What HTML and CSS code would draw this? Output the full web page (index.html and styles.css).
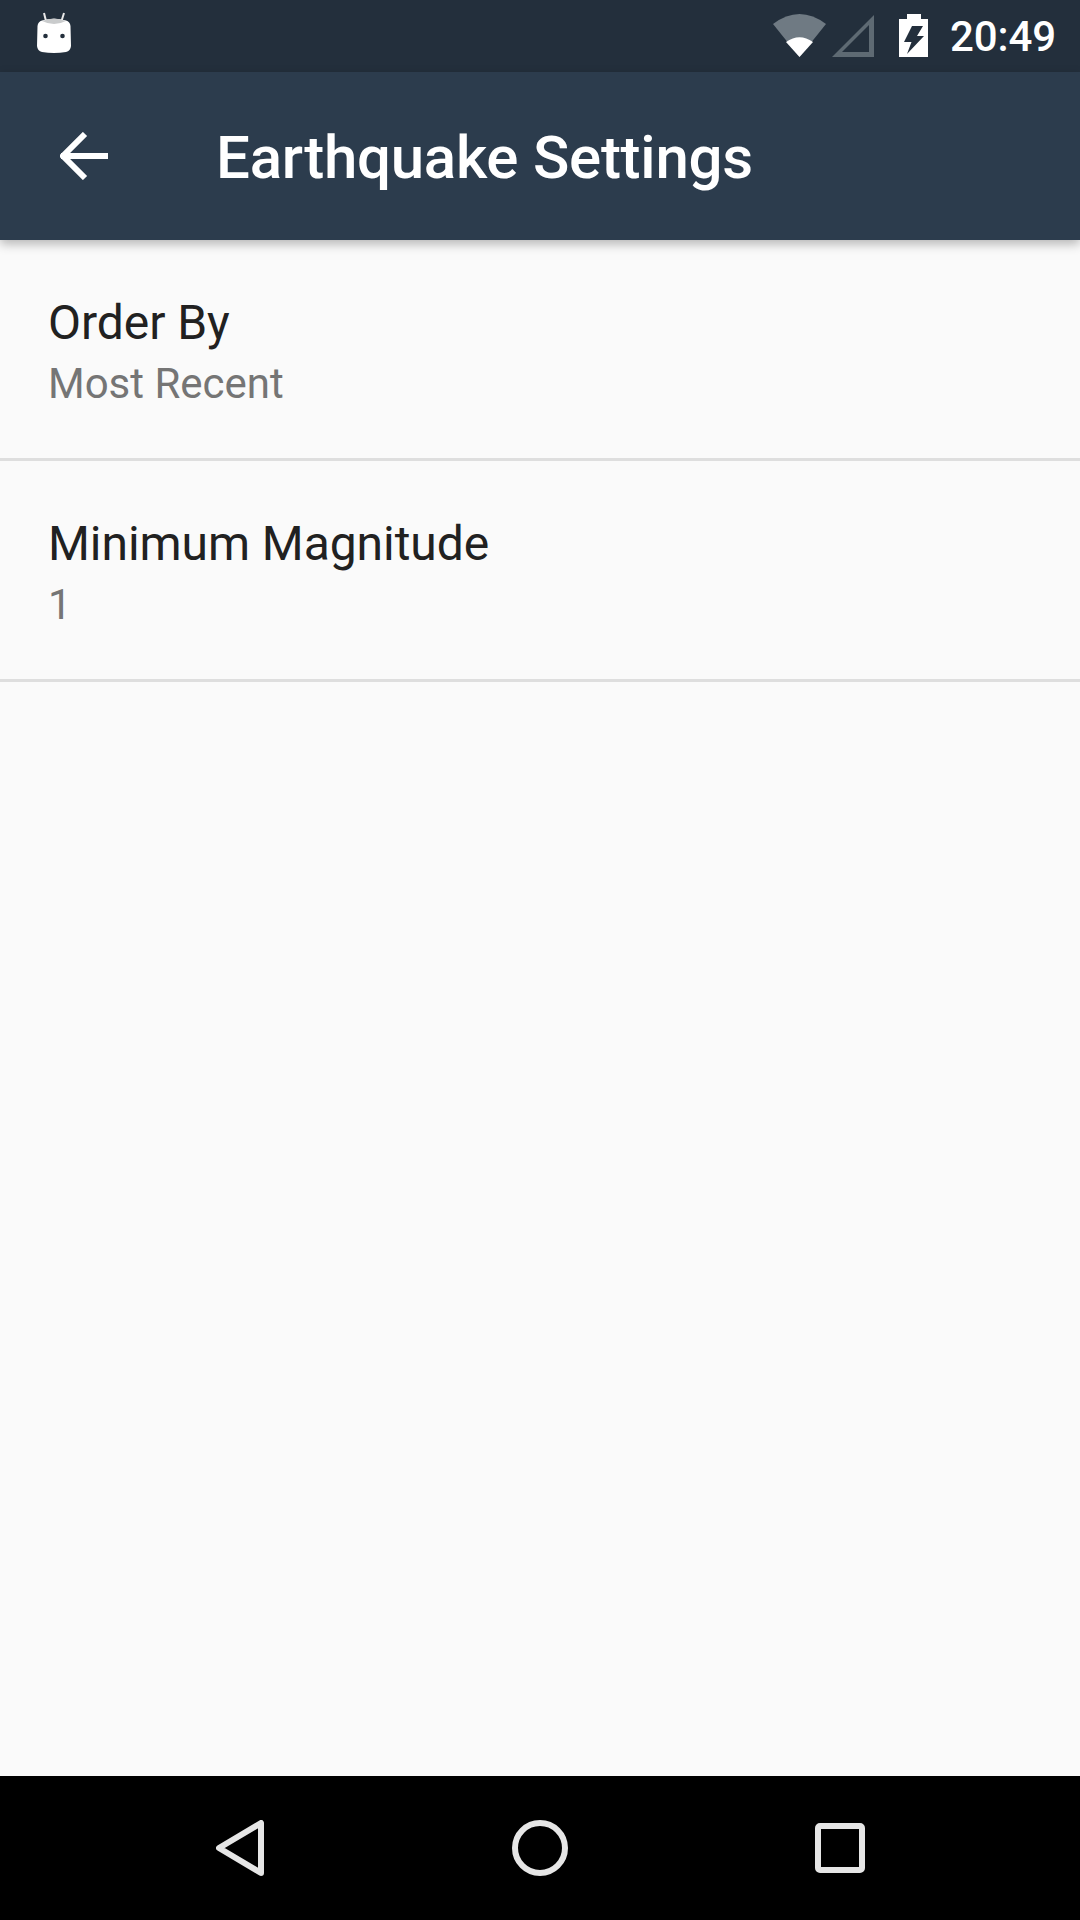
FILE: index.html
```html
<!DOCTYPE html>
<html lang="en">
<head>
<meta charset="utf-8">
<title>Earthquake Settings</title>
<link rel="stylesheet" href="styles.css">
</head>
<body>
<div class="screen">
  <header class="status-bar">
    <svg class="icon-bot" width="36" height="42" viewBox="0 0 36 42">
      <path d="M8 1 L10 9 M28 1 L25.500 9" stroke="#e8e8e8" stroke-width="2" fill="none"/>
      <path d="M6 8.500 Q18 5 30 8.500 Q34 9.500 34.500 14 L35 34 Q34.500 39 30 40 Q18 42 6 40 Q1.500 39 1 34 L1.500 14 Q2 9.500 6 8.500Z" fill="#fff"/>
      <path d="M6 9 Q18 4 30 9 Q18 15 6 9Z" fill="#c9cbcc"/>
      <circle cx="9.500" cy="24" r="2.300" fill="#232f3c"/>
      <circle cx="26.500" cy="24" r="2.300" fill="#232f3c"/>
    </svg>
    <div class="status-right">
      <svg class="icon-wifi" width="53" height="44" viewBox="0 0 53 44">
        <path d="M0 10 Q26.500 -10 53 10 L26.500 43Z" fill="#6f7a83"/>
        <path d="M13 28 Q26.500 18.500 40 28 L26.500 43Z" fill="#fff"/>
      </svg>
      <svg class="icon-signal" width="42" height="44" viewBox="0 0 42 44">
        <path d="M42 1 V43 H0Z M37 11 L10 38 H37Z" fill="#5e6a73" fill-rule="evenodd"/>
      </svg>
      <svg class="icon-battery" width="29" height="44" viewBox="0 0 29 44">
        <path d="M8 0 H22 V5 H29 V43 H0 V5 H8Z M13 12 L5 28 H12.500 L8 40 L25 22 H18 L24 12Z" fill="#fff" fill-rule="evenodd"/>
      </svg>
      <span class="clock">20:49</span>
    </div>
  </header>
  <div class="toolbar">
    <svg class="icon-back" width="48" height="48" viewBox="0 0 48 48">
      <path d="M1 24 H48 M25 2 L3 24 L25 46" stroke="#fff" stroke-width="6" fill="none"/>
    </svg>
    <h1 class="title">Earthquake Settings</h1>
  </div>
  <main class="content">
    <div class="pref">
      <div class="pref-title">Order By</div>
      <div class="pref-summary">Most Recent</div>
    </div>
    <div class="pref">
      <div class="pref-title">Minimum Magnitude</div>
      <div class="pref-summary">1</div>
    </div>
  </main>
  <nav class="nav-bar">
    <svg class="nav-back" width="48" height="56" viewBox="0 0 48 56">
      <path d="M45 3 V53 L3 28Z" stroke="#e6e6e6" stroke-width="6" stroke-linejoin="round" fill="none"/>
    </svg>
    <svg class="nav-home" width="56" height="56" viewBox="0 0 56 56">
      <circle cx="28" cy="28" r="25" stroke="#e6e6e6" stroke-width="6" fill="none"/>
    </svg>
    <svg class="nav-recent" width="50" height="50" viewBox="0 0 50 50">
      <rect x="3" y="3" width="44" height="44" rx="2" stroke="#e6e6e6" stroke-width="6" fill="none"/>
    </svg>
  </nav>
</div>
</body>
</html>
```
FILE: styles.css
```css
* { box-sizing: border-box; }
html, body { margin: 0; padding: 0; }
body { font-family: Roboto, sans-serif; background: #fafafa; }
.screen { width: 1080px; height: 1920px; display: flex; flex-direction: column; overflow: hidden; }
.status-bar { height: 72px; flex: none; background: #232f3c; display: flex; align-items: flex-start; justify-content: space-between; padding: 12px 24px 0 36px; }
.status-right { display: flex; align-items: center; margin-top: 2px; }
.icon-wifi { margin-right: 6px; }
.icon-signal { margin-right: 25px; }
.icon-battery { margin-right: 22px; }
.clock { font-size: 42px; line-height: 44px; font-weight: 500; color: #fff; letter-spacing: -0.1px; position: relative; top: 1px; }
.toolbar { height: 168px; flex: none; background: #2c3c4d; display: flex; align-items: center; padding-left: 60px; position: relative; z-index: 1; box-shadow: 0 4px 10px rgba(0,0,0,.28); }
.icon-back { margin-right: 108px; }
.title { margin: 3px 0 0; font-size: 60px; font-weight: 500; color: #fff; letter-spacing: -0.25px; }
.content { flex: 1; background: #fafafa; }
.pref { height: 221px; border-bottom: 3px solid #dedede; padding: 51px 48px 0; }
.pref-title { font-size: 48px; line-height: 64px; color: #212121; letter-spacing: -0.06px; }
.pref-summary { font-size: 42px; line-height: 58px; color: #757575; }
.nav-bar { height: 144px; flex: none; background: #000; display: flex; align-items: center; padding-left: 216px; }
.nav-home { margin-left: 248px; }
.nav-recent { margin-left: 247px; }
```
